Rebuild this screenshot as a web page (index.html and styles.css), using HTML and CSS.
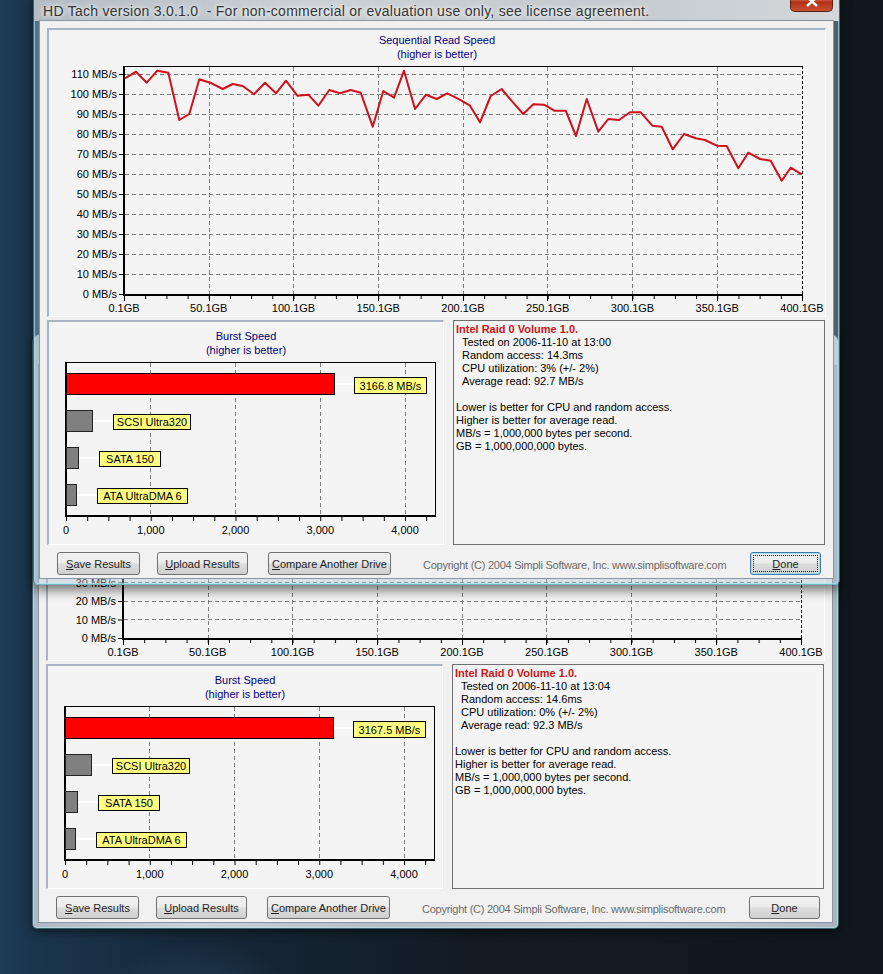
FILE: index.html
```html
<!DOCTYPE html>
<html>
<head>
<meta charset="utf-8">
<title>HD Tach</title>
<link rel="stylesheet" href="styles.css">
</head>
<body>
<div class="desktop">

  <!-- Back (older) result window -->
  <div class="window back">
    <div class="titlebar">
      <div class="title">HD Tach version 3.0.1.0  - For non-commercial or evaluation use only, see license agreement.</div>
      <div class="close"><svg width="14" height="11" viewBox="0 0 14 11"><path d="M2 1L12 10M12 1L2 10" stroke="#fff" stroke-width="2.4"/></svg></div>
    </div>
    <div class="client">
      <div class="panel chart-panel">
        <div class="ptitle">Sequential Read Speed<br>(higher is better)</div>
        <svg class="plot" width="776" height="255" viewBox="0 0 776 255">
          <defs>
            <pattern id="bxt" x="75" y="0" width="21.1875" height="10" patternUnits="userSpaceOnUse"><rect width="1" height="10" fill="#000"/></pattern>
            <pattern id="byt" x="0" y="11" width="10" height="18.5" patternUnits="userSpaceOnUse"><rect width="10" height="1" fill="#000"/></pattern>
          </defs>
          <path d="M76 214.5H753M76 196.5H753M76 177.5H753M76 159.5H753M76 140.5H753M76 122.5H753M76 103.5H753M76 85.5H753M76 66.5H753M76 48.5H753M76 29.5H753M76 11.5H753" stroke="#7d7d7d" stroke-dasharray="4 3"/>
          <path d="M160.5 6V233M244.5 6V233M329.5 6V233M414.5 6V233M498.5 6V233M583.5 6V233M668.5 6V233" stroke="#7d7d7d" stroke-dasharray="4 3"/>
          <rect x="70" y="11" width="4" height="223" fill="url(#byt)"/>
          <rect x="75" y="235" width="680" height="3" fill="url(#bxt)"/>
          <path d="M75.5 235V240M160.5 235V240M244.5 235V240M329.5 235V240M414.5 235V240M498.5 235V240M583.5 235V240M668.5 235V240M753.5 235V240" stroke="#000"/>
          <path d="M75 5.5H754" stroke="#000"/>
          <path d="M753.5 5V234" stroke="#000" stroke-dasharray="3 2"/>
          <rect x="74" y="5" width="2" height="230" fill="#000"/>
          <rect x="74" y="233" width="680" height="2" fill="#000"/>
          <polyline class="line" transform="matrix(1 0 0 0.925 0 17.475)" vector-effect="non-scaling-stroke" points="76,17.3 87,10.7 97.7,21.7 108.3,9.7 119.3,11.7 130.3,59 140.3,53 150.3,18.3 162.7,22.3 173.7,28 183.7,23 193.7,25 205,33.3 216,21.7 227,32.3 237,19.7 248.3,34.7 259.3,33.7 269.3,44.7 280.3,29 291,32.3 301.7,29 311.7,31.7 323.7,65.7 334.3,30 345,36.7 355,9.7 366,48 377,33.7 387.7,38 398.3,32.3 410.3,38.3 421,44.7 431,61.3 441.7,35 452.7,28 463.3,40.7 474.3,53 484.3,43.3 495,43.7 505.3,49.7 516.7,49.7 527,75 537.7,38 549.3,70.7 559.3,58 570,59 581,51.3 591.7,51.3 603.3,64.7 612.7,65.7 623.7,88.3 635,73 646.7,77.3 656,79 667.7,84.7 677.7,85 689.3,107.3 699.3,91.7 711,98 721.7,99.7 732.7,119.7 741.7,106.7 752.7,113.3"/>
          <g class="ylab">
            <text x="68" y="15">120 MB/s</text>
            <text x="68" y="33.5">110 MB/s</text>
            <text x="68" y="52">100 MB/s</text>
            <text x="68" y="70.5">90 MB/s</text>
            <text x="68" y="89">80 MB/s</text>
            <text x="68" y="107.5">70 MB/s</text>
            <text x="68" y="126">60 MB/s</text>
            <text x="68" y="144.5">50 MB/s</text>
            <text x="68" y="163">40 MB/s</text>
            <text x="68" y="181.5">30 MB/s</text>
            <text x="68" y="200">20 MB/s</text>
            <text x="68" y="218.5">10 MB/s</text>
            <text x="68" y="237">0 MB/s</text>
          </g>
          <g class="xlab">
            <text x="75" y="251">0.1GB</text>
            <text x="159.75" y="251">50.1GB</text>
            <text x="244.5" y="251">100.1GB</text>
            <text x="329.25" y="251">150.1GB</text>
            <text x="414" y="251">200.1GB</text>
            <text x="498.75" y="251">250.1GB</text>
            <text x="583.5" y="251">300.1GB</text>
            <text x="668.25" y="251">350.1GB</text>
            <text x="753" y="251">400.1GB</text>
          </g>
        </svg>
      </div>
      <div class="lower">
        <div class="panel burst-panel">
          <div class="ptitle">Burst Speed<br>(higher is better)</div>
          <svg class="plot" width="394" height="187" viewBox="0 0 394 187">
            <defs>
              <pattern id="bbt" x="17" y="0" width="21.1875" height="10" patternUnits="userSpaceOnUse"><rect width="1" height="10" fill="#000"/></pattern>
            </defs>
            <path d="M101.5 6V158M186.5 6V158M271.5 6V158M356.5 6V158" stroke="#7d7d7d" stroke-dasharray="4 3"/>
            <path d="M16 5.5H387M386.5 5V160" stroke="#000"/>
            <rect x="16" y="5" width="2" height="155" fill="#000"/>
            <rect x="16" y="158" width="371" height="2" fill="#000"/>
            <rect x="17" y="160" width="370" height="4" fill="url(#bbt)"/>
            <path d="M286 27H305M44 64H64M30 101H50M28 138H48" stroke="#fff" stroke-width="2"/>
            <rect class="bar-red" x="17.5" y="16.5" width="268" height="21"/>
            <rect class="bar-gray" x="17.5" y="53.5" width="26" height="21"/>
            <rect class="bar-gray" x="17.5" y="90.5" width="12" height="21"/>
            <rect class="bar-gray" x="17.5" y="127.5" width="10" height="21"/>
            <rect class="tag" x="305.5" y="20.5" width="72" height="16"/>
            <rect class="tag" x="64.5" y="57.5" width="77" height="15"/>
            <rect class="tag" x="50.5" y="94.5" width="61" height="15"/>
            <rect class="tag" x="48.5" y="131.5" width="90" height="15"/>
            <g class="xlab">
              <text x="341.5" y="32.5">3167.5 MB/s</text>
              <text x="103" y="69">SCSI Ultra320</text>
              <text x="81" y="106">SATA 150</text>
              <text x="93.5" y="143">ATA UltraDMA 6</text>
              <text x="17" y="177">0</text>
              <text x="101.75" y="177">1,000</text>
              <text x="186.5" y="177">2,000</text>
              <text x="271.25" y="177">3,000</text>
              <text x="356" y="177">4,000</text>
            </g>
          </svg>
        </div>
        <div class="info">
          <div class="drive">Intel Raid 0 Volume 1.0.</div>
          <div class="ind">Tested on 2006-11-10 at 13:04</div>
          <div class="ind">Random access: 14.6ms</div>
          <div class="ind">CPU utilization: 0% (+/- 2%)</div>
          <div class="ind">Average read: 92.3 MB/s</div>
          <div class="blank"></div>
          <div>Lower is better for CPU and random access.</div>
          <div>Higher is better for average read.</div>
          <div>MB/s = 1,000,000 bytes per second.</div>
          <div>GB = 1,000,000,000 bytes.</div>
        </div>
      </div>
      <div class="buttons">
        <button class="btn save"><span><u>S</u>ave Results</span></button>
        <button class="btn upload"><span><u>U</u>pload Results</span></button>
        <button class="btn compare"><span><u>C</u>ompare Another Drive</span></button>
        <span class="copy">Copyright (C) 2004 Simpli Software, Inc. www.simplisoftware.com</span>
        <button class="btn done"><span><u>D</u>one</span></button>
      </div>
    </div>
  </div>

  <!-- Front (active) result window -->
  <div class="window front">
    <div class="titlebar">
      <div class="title">HD Tach version 3.0.1.0  - For non-commercial or evaluation use only, see license agreement.</div>
      <div class="close"><svg width="14" height="11" viewBox="0 0 14 11"><path d="M2 1L12 10M12 1L2 10" stroke="#fff" stroke-width="2.4"/></svg></div>
    </div>
    <div class="client">
      <div class="panel chart-panel">
        <div class="ptitle">Sequential Read Speed<br>(higher is better)</div>
        <svg class="plot" width="776" height="255" viewBox="0 0 776 255">
          <defs>
            <pattern id="fxt" x="75" y="0" width="21.1875" height="10" patternUnits="userSpaceOnUse"><rect width="1" height="10" fill="#000"/></pattern>
            <pattern id="fyt" x="0" y="13" width="10" height="20" patternUnits="userSpaceOnUse"><rect width="10" height="1" fill="#000"/></pattern>
          </defs>
          <path d="M76 213.5H753M76 193.5H753M76 173.5H753M76 153.5H753M76 133.5H753M76 113.5H753M76 93.5H753M76 73.5H753M76 53.5H753M76 33.5H753M76 13.5H753" stroke="#7d7d7d" stroke-dasharray="4 3"/>
          <path d="M160.5 6V233M244.5 6V233M329.5 6V233M414.5 6V233M498.5 6V233M583.5 6V233M668.5 6V233" stroke="#7d7d7d" stroke-dasharray="4 3"/>
          <rect x="70" y="13" width="4" height="221" fill="url(#fyt)"/>
          <rect x="75" y="235" width="680" height="3" fill="url(#fxt)"/>
          <path d="M75.5 235V240M160.5 235V240M244.5 235V240M329.5 235V240M414.5 235V240M498.5 235V240M583.5 235V240M668.5 235V240M753.5 235V240" stroke="#000"/>
          <path d="M75 5.5H754" stroke="#000"/>
          <path d="M753.5 5V234" stroke="#000" stroke-dasharray="3 2"/>
          <rect x="74" y="5" width="2" height="230" fill="#000"/>
          <rect x="74" y="233" width="680" height="2" fill="#000"/>
          <polyline class="line" points="76,17.3 87,10.7 97.7,21.7 108.3,9.7 119.3,11.7 130.3,59 140.3,53 150.3,18.3 162.7,22.3 173.7,28 183.7,23 193.7,25 205,33.3 216,21.7 227,32.3 237,19.7 248.3,34.7 259.3,33.7 269.3,44.7 280.3,29 291,32.3 301.7,29 311.7,31.7 323.7,65.7 334.3,30 345,36.7 355,9.7 366,48 377,33.7 387.7,38 398.3,32.3 410.3,38.3 421,44.7 431,61.3 441.7,35 452.7,28 463.3,40.7 474.3,53 484.3,43.3 495,43.7 505.3,49.7 516.7,49.7 527,75 537.7,38 549.3,70.7 559.3,58 570,59 581,51.3 591.7,51.3 603.3,64.7 612.7,65.7 623.7,88.3 635,73 646.7,77.3 656,79 667.7,84.7 677.7,85 689.3,107.3 699.3,91.7 711,98 721.7,99.7 732.7,119.7 741.7,106.7 752.7,113.3"/>
          <g class="ylab">
            <text x="68" y="17">110 MB/s</text>
            <text x="68" y="37">100 MB/s</text>
            <text x="68" y="57">90 MB/s</text>
            <text x="68" y="77">80 MB/s</text>
            <text x="68" y="97">70 MB/s</text>
            <text x="68" y="117">60 MB/s</text>
            <text x="68" y="137">50 MB/s</text>
            <text x="68" y="157">40 MB/s</text>
            <text x="68" y="177">30 MB/s</text>
            <text x="68" y="197">20 MB/s</text>
            <text x="68" y="217">10 MB/s</text>
            <text x="68" y="237">0 MB/s</text>
          </g>
          <g class="xlab">
            <text x="75" y="251">0.1GB</text>
            <text x="159.75" y="251">50.1GB</text>
            <text x="244.5" y="251">100.1GB</text>
            <text x="329.25" y="251">150.1GB</text>
            <text x="414" y="251">200.1GB</text>
            <text x="498.75" y="251">250.1GB</text>
            <text x="583.5" y="251">300.1GB</text>
            <text x="668.25" y="251">350.1GB</text>
            <text x="753" y="251">400.1GB</text>
          </g>
        </svg>
      </div>
      <div class="lower">
        <div class="panel burst-panel">
          <div class="ptitle">Burst Speed<br>(higher is better)</div>
          <svg class="plot" width="394" height="187" viewBox="0 0 394 187">
            <defs>
              <pattern id="fbt" x="17" y="0" width="21.1875" height="10" patternUnits="userSpaceOnUse"><rect width="1" height="10" fill="#000"/></pattern>
            </defs>
            <path d="M101.5 6V158M186.5 6V158M271.5 6V158M356.5 6V158" stroke="#7d7d7d" stroke-dasharray="4 3"/>
            <path d="M16 5.5H387M386.5 5V160" stroke="#000"/>
            <rect x="16" y="5" width="2" height="155" fill="#000"/>
            <rect x="16" y="158" width="371" height="2" fill="#000"/>
            <rect x="17" y="160" width="370" height="4" fill="url(#fbt)"/>
            <path d="M286 27H305M44 64H64M30 101H50M28 138H48" stroke="#fff" stroke-width="2"/>
            <rect class="bar-red" x="17.5" y="16.5" width="268" height="21"/>
            <rect class="bar-gray" x="17.5" y="53.5" width="26" height="21"/>
            <rect class="bar-gray" x="17.5" y="90.5" width="12" height="21"/>
            <rect class="bar-gray" x="17.5" y="127.5" width="10" height="21"/>
            <rect class="tag" x="305.5" y="20.5" width="72" height="16"/>
            <rect class="tag" x="64.5" y="57.5" width="77" height="15"/>
            <rect class="tag" x="50.5" y="94.5" width="61" height="15"/>
            <rect class="tag" x="48.5" y="131.5" width="90" height="15"/>
            <g class="xlab">
              <text x="341.5" y="32.5">3166.8 MB/s</text>
              <text x="103" y="69">SCSI Ultra320</text>
              <text x="81" y="106">SATA 150</text>
              <text x="93.5" y="143">ATA UltraDMA 6</text>
              <text x="17" y="177">0</text>
              <text x="101.75" y="177">1,000</text>
              <text x="186.5" y="177">2,000</text>
              <text x="271.25" y="177">3,000</text>
              <text x="356" y="177">4,000</text>
            </g>
          </svg>
        </div>
        <div class="info">
          <div class="drive">Intel Raid 0 Volume 1.0.</div>
          <div class="ind">Tested on 2006-11-10 at 13:00</div>
          <div class="ind">Random access: 14.3ms</div>
          <div class="ind">CPU utilization: 3% (+/- 2%)</div>
          <div class="ind">Average read: 92.7 MB/s</div>
          <div class="blank"></div>
          <div>Lower is better for CPU and random access.</div>
          <div>Higher is better for average read.</div>
          <div>MB/s = 1,000,000 bytes per second.</div>
          <div>GB = 1,000,000,000 bytes.</div>
        </div>
      </div>
      <div class="buttons">
        <button class="btn save"><span><u>S</u>ave Results</span></button>
        <button class="btn upload"><span><u>U</u>pload Results</span></button>
        <button class="btn compare"><span><u>C</u>ompare Another Drive</span></button>
        <span class="copy">Copyright (C) 2004 Simpli Software, Inc. www.simplisoftware.com</span>
        <button class="btn done focus"><span><u>D</u>one</span></button>
      </div>
    </div>
  </div>

</div>
</body>
</html>
```

FILE: styles.css
```css
* { box-sizing: border-box; }

html, body {
  margin: 0;
  padding: 0;
}

body {
  width: 883px;
  height: 974px;
  overflow: hidden;
  background:
    radial-gradient(ellipse 90px 60px at 200px 1000px, rgba(60, 105, 140, 0.3), rgba(0, 0, 0, 0)),
    linear-gradient(90deg, #1e3c56 0px, #1a364d 30px, #16283a 180px, #121b24 480px, #10171d 883px);
  font-family: "Liberation Sans", Arial, sans-serif;
  font-size: 11px;
  color: #000;
}

.desktop {
  position: relative;
  width: 883px;
  height: 974px;
  overflow: hidden;
}

/* ---------- windows ---------- */
.window {
  position: absolute;
  width: 807px;
  height: 595px;
  display: flex;
  flex-direction: column;
  border: 1px solid #3e6672;
  border-radius: 8px 8px 5px 5px;
}

.front {
  left: 33px;
  top: -10px;
  background: rgba(175, 196, 210, 0.42);
  border-bottom-color: #6fb6c2;
  box-shadow: inset 0 0 0 1px rgba(170, 230, 240, 0.7), 0 5px 12px rgba(0, 0, 0, 0.55);
}

.back {
  left: 32px;
  top: 334px;
  background: linear-gradient(90deg, #aeb9c3 0, #c9d1d8 20%, #b3bdc6 45%, #c6ced5 75%, #aab4be 100%);
  box-shadow: inset 0 0 0 1px rgba(190, 235, 242, 0.6), 0 3px 10px rgba(0, 0, 0, 0.5);
}

.titlebar {
  height: 30px;
  display: flex;
  border-radius: 7px 7px 0 0;
  background: linear-gradient(90deg, #b3bbc3 0, #cbd0d4 35%, #c4cacf 70%, #d3d7da 100%);
}

.title {
  flex: 1;
  padding: 11px 0 0 9px;
  font-size: 14px;
  line-height: 18px;
  letter-spacing: 0.27px;
  color: #353535;
  white-space: pre;
  text-shadow: 0 0 4px #fff, 0 0 8px rgba(255, 255, 255, 0.8);
}

.close {
  width: 43px;
  height: 21px;
  margin-right: 6px;
  border: 1px solid #5b2015;
  border-top: none;
  border-radius: 0 0 5px 5px;
  background: linear-gradient(180deg, #e49a88 0, #cf5a40 45%, #b12f14 55%, #c8512f 100%);
  display: flex;
  align-items: center;
  justify-content: center;
}

.close svg { display: block; }

.client {
  flex: 1;
  margin: 0 6px 6px;
  padding: 7px 0 0 7px;
  background: #f1f1f1;
  box-shadow: 0 0 0 1px #8796a3;
  display: flex;
  flex-direction: column;
}

/* ---------- panels ---------- */
.panel {
  background: #f4f4f4;
  border-style: solid;
  border-width: 2px 1px 1px 2px;
  border-color: #a6b4c3 #ffffff #ffffff #a6b4c3;
}

.chart-panel {
  width: 779px;
  height: 289px;
}

.ptitle {
  color: #000080;
  text-align: center;
  line-height: 14px;
}

.chart-panel .ptitle { padding-top: 3px; }
.burst-panel .ptitle { padding-top: 7px; }

.plot { display: block; }

.plot text {
  font-family: "Liberation Sans", Arial, sans-serif;
  font-size: 11px;
  fill: #000;
}

.ylab text { text-anchor: end; }
.xlab text { text-anchor: middle; }

.line {
  fill: none;
  stroke: #d0101c;
  stroke-width: 2;
  stroke-linejoin: round;
}

.bar-red { fill: #ff0000; stroke: #000; }
.bar-gray { fill: #808080; stroke: #222; }
.tag { fill: #ffff80; stroke: #000; }

.lower {
  display: flex;
  gap: 9px;
  margin-top: 3px;
  height: 225px;
}

.burst-panel { width: 397px; }

.info {
  width: 372px;
  border: 1px solid #6f6f6f;
  background: #f4f4f4;
  padding: 2px 0 0 2px;
  line-height: 13px;
}

.drive {
  color: #cc1414;
  font-weight: bold;
}

.ind { padding-left: 6px; }
.blank { height: 13px; }

/* ---------- buttons ---------- */
.buttons {
  display: flex;
  align-items: center;
  height: 23px;
  margin-top: 7px;
  padding-right: 12px;
}

.btn {
  height: 23px;
  padding: 2px;
  border: 1px solid #707070;
  border-radius: 3px;
  background: linear-gradient(180deg, #f3f3f3 0, #ebebeb 48%, #dddddd 52%, #cfcfcf 100%);
  font-family: "Liberation Sans", Arial, sans-serif;
  font-size: 11px;
  color: #1e1e1e;
  display: flex;
}

.btn span {
  flex: 1;
  display: flex;
  align-items: center;
  justify-content: center;
  border: 1px solid transparent;
}

.save { width: 83px; margin-left: 10px; }
.upload { width: 91px; margin-left: 17px; }
.compare { width: 123px; margin-left: 20px; }

.copy {
  margin-left: 32px;
  color: #6a6a6a;
  white-space: nowrap;
  letter-spacing: -0.25px;
  padding-top: 2px;
}

.done {
  width: 71px;
  margin-left: auto;
}

.focus {
  border-color: #3c7fae;
  box-shadow: inset 0 0 0 1px #9fdcef;
}

.focus span {
  border: 1px dotted #1a1a1a;
}
```
